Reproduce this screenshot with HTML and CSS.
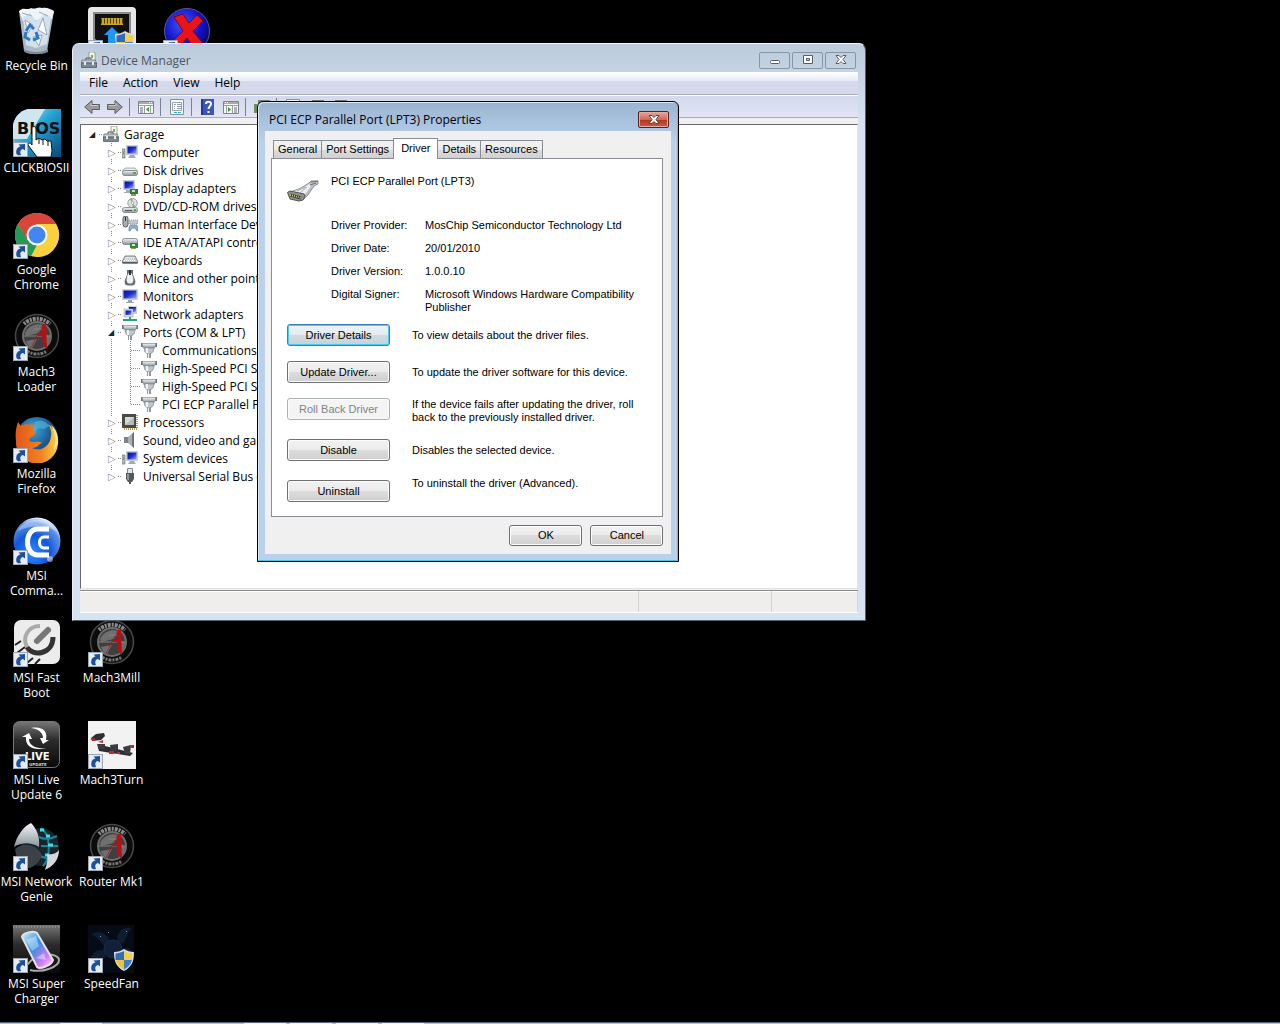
FILE: index.html
```html
<!DOCTYPE html>
<html lang="en">
<head>
  <meta charset="UTF-8">
  <title>Device Manager</title>
  <link rel="stylesheet" href="styles.css">
</head>
<body>
  <!-- shared icons -->
  <svg class="sprite" aria-hidden="true">
    <defs>
      <linearGradient id="g-metal" x1="0" y1="0" x2="0" y2="1">
        <stop offset="0" stop-color="#f4f6f8"/><stop offset="1" stop-color="#8b949b"/>
      </linearGradient>
      <linearGradient id="g-screen" x1="0" y1="0" x2="1" y2="1">
        <stop offset="0" stop-color="#0a0a9c"/><stop offset=".5" stop-color="#1c2fd0"/><stop offset="1" stop-color="#9db4f5"/>
      </linearGradient>
      <linearGradient id="g-sky" x1="0" y1="0" x2="1" y2="1">
        <stop offset="0" stop-color="#d5eef8"/><stop offset=".45" stop-color="#27a5d6"/><stop offset="1" stop-color="#034a78"/>
      </linearGradient>
      <linearGradient id="g-dark" x1="0" y1="0" x2="0" y2="1">
        <stop offset="0" stop-color="#777"/><stop offset=".4" stop-color="#2c2c2c"/><stop offset="1" stop-color="#080808"/>
      </linearGradient>
      <linearGradient id="g-phone" x1="0" y1="0" x2="1" y2="1">
        <stop offset="0" stop-color="#d7f3fb"/><stop offset=".4" stop-color="#2d8fe0"/><stop offset=".75" stop-color="#d77bf0"/><stop offset="1" stop-color="#fbe6ff"/>
      </linearGradient>
      <radialGradient id="g-blue" cx=".4" cy=".75" r=".75">
        <stop offset="0" stop-color="#2c8cff"/><stop offset=".5" stop-color="#1257d8"/><stop offset=".85" stop-color="#5c93e8"/><stop offset="1" stop-color="#e4efff"/>
      </radialGradient>
      <radialGradient id="g-ball" cx=".4" cy=".35" r=".7">
        <stop offset="0" stop-color="#4455ff"/><stop offset=".6" stop-color="#1212c8"/><stop offset="1" stop-color="#05055a"/>
      </radialGradient>
      <radialGradient id="g-globe" cx=".4" cy=".3" r=".7">
        <stop offset="0" stop-color="#3aa7dc"/><stop offset="1" stop-color="#0b2c63"/>
      </radialGradient>
      <linearGradient id="g-fox" x1="0" y1="0" x2="1" y2="0">
        <stop offset="0" stop-color="#e2571a"/><stop offset=".6" stop-color="#f08321"/><stop offset="1" stop-color="#fbd24a"/>
      </linearGradient>
    </defs>

    <symbol id="shortcut" viewBox="0 0 15 15">
      <path d="M0 0h15v15H0z" fill="#9fa6ad"/>
      <path d="M1 1h13v13H1z" fill="#e6ecf3"/>
      <path d="M3.500 12C2.500 7.500 4.500 5 7.500 4.500L5.500 2.500l6.500-.5v6.500L10 7C7.500 7.500 6.500 9.500 8 13c-2 .500-3.500.500-4.500-1z" fill="#1d4f9c"/>
    </symbol>
    <symbol id="shield" viewBox="0 0 20 22">
      <path d="M10 0c3 2 6 3 10 3 0 9-2 15-10 19C2 18 0 12 0 3c4 0 7-1 10-3z" fill="#d9dde2"/>
      <path d="M10 2C7 3.500 4 4.500 1.500 4.500V11H10z" fill="#2c6bbd"/>
      <path d="M10 2c3 1.500 6 2.500 8.500 2.500L18 11h-8z" fill="#f6cf4a"/>
      <path d="M2 11h8v9.500C5.500 18 3 15 2 11z" fill="#f1c232"/>
      <path d="M10 11h8c-1 4-3.500 7-8 9.500z" fill="#3b7ccb"/>
    </symbol>
    <symbol id="mach3" viewBox="0 0 48 48">
      <circle cx="24" cy="23" r="21.500" fill="#0c0c0c" stroke="#484848" stroke-width="1.500"/>
      <path d="M11 11C18 4 30 4 37 11" fill="none" stroke="#8a8a8a" stroke-width="4" stroke-dasharray="2 1 3 1"/>
      <path d="M14 38c6 4 14 4 20 0" fill="none" stroke="#777" stroke-width="3" stroke-dasharray="3 1 2 1"/>
      <circle cx="24" cy="23" r="14" fill="#3f3f3f" stroke="#6e6e6e" stroke-width="2"/>
      <path d="M12 20c4-8 12-10 18-8l-4 8-13 3zM13 28l11-2-5 9c-3-1-5-4-6-7zM32 21l5 2c0 5-2 8-5 10z" fill="#6f6f6f"/>
      <path d="M11 23h26M21 16h12" stroke="#858585"/>
      <path d="M16 37c5-5 8-15 14-26h3l1 25-4-4-1-9h-6c-2 5-4 10-7 14zM24 21h5l-.500-7z" fill="#b80f14" fill-rule="evenodd"/>
    </symbol>

    <!-- device tree icons -->
    <symbol id="i-case" viewBox="0 0 16 16">
      <path d="M8 0h5l1 1v8H8z" fill="#f4f6ec" stroke="#8a8f83" stroke-width=".8"/>
      <path d="M10 3h2v3h-2z" fill="#74b843"/>
      <path d="M5 8V6h5v2" fill="none" stroke="#4e585e"/>
      <path d="M1 8h13l1.500 3H.5z" fill="#c5ccd1" stroke="#5c666c" stroke-width=".7"/>
      <path d="M.5 11h15v4.500H.5z" fill="#7d8990" stroke="#465057" stroke-width=".7"/>
      <path d="M3 10h2v3H3zM11 10h2v3h-2z" fill="#e7ecef"/>
    </symbol>
    <symbol id="i-computer" viewBox="0 0 16 16">
      <path d="M0 5h3v9H0z" fill="#b7bdb0" stroke="#6f766b" stroke-width=".7"/>
      <path d="M1 7h1v3H1z" fill="#63b437"/>
      <path d="M4 1h12v10H4z" fill="#c8ced6"/>
      <path d="M5.500 2.500h9v7h-9z" fill="url(#g-screen)"/>
      <path d="M8 11h4l2 3H6z" fill="#a4abb3"/>
    </symbol>
    <symbol id="i-disk" viewBox="0 0 16 16">
      <path d="M3 6h10l2.500 3H.5z" fill="#e8eaec" stroke="#8b9196" stroke-width=".7"/>
      <rect x=".5" y="8.500" width="15" height="5" rx="2" fill="url(#g-metal)" stroke="#767c81" stroke-width=".8"/>
      <path d="M11 10h3v2h-3z" fill="#58a83c"/>
    </symbol>
    <symbol id="i-display" viewBox="0 0 16 16">
      <path d="M1 0h12v10H1z" fill="#c8ced6"/>
      <path d="M2.500 1.500h9v7h-9z" fill="url(#g-screen)"/>
      <path d="M4 10h5v2H4zM2 12h7v1H2z" fill="#a4abb3"/>
      <path d="M8 9h8v5H8z" fill="#2c7b45"/>
      <path d="M10 10h3v2h-3z" fill="#c9d8cc"/><path d="M9 14h5v2H9z" fill="#8d9a49"/>
    </symbol>
    <symbol id="i-dvd" viewBox="0 0 16 16">
      <circle cx="10.500" cy="5" r="4.700" fill="#dfe3e6" stroke="#83898e" stroke-width=".8"/>
      <path d="M10.500 5L8 1.500 10.500.500zM10.500 5l3 3.500-3 1z" fill="#8fa49a"/>
      <circle cx="10.500" cy="5" r="1.300" fill="#fff" stroke="#777" stroke-width=".5"/>
      <rect x=".5" y="9.500" width="15" height="5" rx="2" fill="url(#g-metal)" stroke="#767c81" stroke-width=".8"/>
      <path d="M3 12h7v1H3z" fill="#555"/><path d="M12 11h2v2h-2z" fill="#58a83c"/>
    </symbol>
    <symbol id="i-hid" viewBox="0 0 16 16">
      <rect x="1" y="0" width="5" height="11" rx="2.500" fill="#a9afb5" stroke="#555b60"/>
      <path d="M3 1h1v4H3z" fill="#333"/>
      <path d="M7 4h9v4H7z" fill="#c3c8cc" stroke="#6c7277" stroke-width=".6" stroke-dasharray="1 1"/>
      <path d="M8 15c-2 1-1-6 1-6h5c2 0 3 7 1 6l-2-3h-3z" fill="#8bb5cf" stroke="#537790" stroke-width=".7"/>
    </symbol>
    <symbol id="i-ide" viewBox="0 0 16 16">
      <rect x=".5" y="4.500" width="15" height="6" rx="2" fill="url(#g-metal)" stroke="#767c81" stroke-width=".8"/>
      <path d="M8 9h8v5H8z" fill="#2f8a3d"/><path d="M10 10h3v2h-3z" fill="#cfe5cf"/><path d="M9 14h5v1H9z" fill="#9b9b3c"/>
    </symbol>
    <symbol id="i-keyboard" viewBox="0 0 16 16">
      <path d="M3 4h10l2.500 5v2H.5V9z" fill="#c5cacf" stroke="#72787d" stroke-width=".9"/>
      <path d="M3.500 5.500h9M3 7h10M2 8.500h12" stroke="#fff" stroke-dasharray="1 1"/>
      <path d="M.5 10h15v1.500H.5z" fill="#50565b"/>
    </symbol>
    <symbol id="i-mouse" viewBox="0 0 16 16">
      <path d="M5 0h6v5c2 4 3 6 2 9-1 2-9 2-10 0-1-3 0-5 2-9z" fill="#666c72"/>
      <path d="M6 4c1-2 3-2 4 0 1 3 2 5 1 8-1 2-5 2-6 0-1-3 0-5 1-8z" fill="#eef0f2"/>
      <path d="M7 0h2v5H7z" fill="#2d3135"/>
    </symbol>
    <symbol id="i-monitor" viewBox="0 0 16 16">
      <path d="M0 1h16v11H0z" fill="#cdd2d8"/>
      <path d="M1.500 2.500h13v8h-13z" fill="url(#g-screen)"/>
      <path d="M6 12h4v2h2v1H4v-1h2z" fill="#9aa1a8"/>
    </symbol>
    <symbol id="i-network" viewBox="0 0 16 16">
      <path d="M6 0h9v8H6z" fill="#c8ced6"/><path d="M7 1h7v5H7z" fill="url(#g-screen)"/>
      <path d="M2 3h9v8H2z" fill="#dde1e6" stroke="#8a9097" stroke-width=".5"/><path d="M3.500 4.500h6v4.500h-6z" fill="url(#g-screen)"/>
      <path d="M7 11h2v2h6v2H1v-2h6z" fill="#1fa56b"/>
    </symbol>
    <symbol id="i-port" viewBox="0 0 16 16">
      <path d="M0 1h2v4H0zM14 1h2v4h-2z" fill="#6d757c"/>
      <path d="M1 1.500h14L13.500 6h-11z" fill="url(#g-metal)" stroke="#818a91" stroke-width=".7"/>
      <path d="M3 6h10l-1 4-2 1v1H6v-1l-2-1z" fill="#bfc7cd" stroke="#7b848b" stroke-width=".7"/>
      <path d="M5 6h2v5H5z" fill="#f1f4f6"/>
      <path d="M6 12h4v4H6z" fill="#8d969d"/><path d="M7 12h1v4H7z" fill="#f1f4f6"/>
    </symbol>
    <symbol id="i-cpu" viewBox="0 0 16 16">
      <path d="M0 0h14v14H0z" fill="#4a4a46"/>
      <path d="M15 1v14H1" fill="none" stroke="#b39b52" stroke-width="2" stroke-dasharray="1 1"/>
      <path d="M3 3h9v8H3z" fill="#b7bbbe"/><path d="M3 3h9L3 11z" fill="#d6d9db"/>
    </symbol>
    <symbol id="i-sound" viewBox="0 0 16 16">
      <path d="M2 5h4v6H2z" fill="#7b8289"/><path d="M6 5l6-5v16l-6-5z" fill="#aab0b6"/><path d="M10 2l2-2v16l-2-2z" fill="#6b7278"/>
    </symbol>
    <symbol id="i-usb" viewBox="0 0 16 16">
      <path d="M5.500 .5h5v5h-5z" fill="#e3e5e7" stroke="#83888c"/>
      <path d="M4 5h8v6l-2 3H6l-2-3z" fill="#55595d"/><path d="M5 6h2v6H6l-1-1z" fill="#93989c"/><path d="M7 14h2v2H7z" fill="#555"/>
    </symbol>

    <!-- toolbar icons -->
    <symbol id="t-arrow" viewBox="0 0 16 16">
      <path d="M8 1.500v4h7.500v5H8v4L.7 8z" fill="#9b9b9b" stroke="#5e5e5e"/>
      <path d="M7 4v2.500h7" fill="none" stroke="#c7c7c7"/>
    </symbol>
    <symbol id="t-pane" viewBox="0 0 16 16">
      <path d="M.5 2.500h15v12H.5z" fill="#f9f9f6" stroke="#7f8489"/>
      <path d="M1 3h14v2H1z" fill="#a8acb0"/><path d="M11 3h1v1h-1zM13 3h1v1h-1z" fill="#fff"/>
      <path d="M1 6.500h14M6.500 7v7M12.500 7v7" stroke="#9a9ea2"/>
      <path d="M2 9h3M2 11h3M2 13h3" stroke="#5d6d82"/>
      <path d="M11 8v5L8 10.500z" fill="#3c9a32"/>
    </symbol>
    <symbol id="t-props" viewBox="0 0 16 16">
      <path d="M1.500 .5h13v15h-13z" fill="#f7f7f5" stroke="#8a8f94"/>
      <path d="M3.500 3.500h9v8h-9z" fill="#fff" stroke="#9fa4a9"/>
      <path d="M5 5.500h2M8 5.500h4M5 7.500h1M8 7.500h4M5 9.500h1M8 9.500h4" stroke="#8aa0b5"/>
      <path d="M5 13h3v1H5zM9 13h3v1H9z" fill="#29a9d8"/>
    </symbol>
    <symbol id="t-help" viewBox="0 0 16 16">
      <path d="M1 0h13v16H1z" fill="#3c55b8"/><path d="M1 0h2v16H1z" fill="#233a92"/>
      <path d="M6 5c0-3 5-3 5 0 0 2-2.500 2.500-2.500 5M8.500 12v2" fill="none" stroke="#fff" stroke-width="2"/>
    </symbol>
    <symbol id="t-scan" viewBox="0 0 16 16">
      <path d="M4 1h12v9H4z" fill="#777d70"/><path d="M6 3h8v5H6z" fill="#2b3a8c"/><path d="M0 5h3v9H0z" fill="#6f8d5d"/>
    </symbol>
  </svg>

  <main class="desktop">
    <ul class="shortcuts">
      <li>
        <a href="#">
          <svg viewBox="0 0 48 48">
            <path d="M6 4l5 40c2 4 20 4 23 0l7-40z" fill="#a9bac6"/>
            <path d="M6 4c5-5 8 0 12-3 5 2 7-2 11 0 5-1 8 1 12 3l-2 8-29 2z" fill="#eef4f8"/>
            <path d="M10 10l7-4 6 8 9-7 6 3-4 27-11 4-10-3z" fill="#d5e1ea"/>
            <path d="M12 13l8 5-5 8zM30 11l-5 12 9 5zM20 30l9-2-3 11zM9 6l10 3M26 5l9 4" fill="#f8fbfd" stroke="#98aab8"/>
            <path d="M13 24l4-6 4 4M23 25l2 6-5 2M17 33l-5-3 1-5" fill="none" stroke="#2f74cc" stroke-width="3"/>
            <path d="M11 42c6 4 18 4 24 0v3c-6 3-18 3-23 0z" fill="#7c8b96"/>
          </svg>
          <span>Recycle Bin</span>
        </a>
      </li>
      <li>
        <a href="#">
          <svg viewBox="0 0 48 48">
            <path d="M0 16C2 6 9 1 16 0h32v48H0z" fill="url(#g-sky)"/>
            <path d="M0 16C2 6 9 1 16 0h16L14 30H0z" fill="#cfe6ef"/>
            <text x="4" y="25" class="logo-bios">BIOS</text>
            <path d="M19 18c3-1 4 0 4 3v10l3-2 3 2 3-1 2 2 4 0 1 10-1 6H24l-9-12c0-2 2-3 4 0z" fill="#fff" stroke="#111"/>
            <path d="M26 30v5M30 31v5M35 32v5" stroke="#111"/>
            <use href="#shortcut" x="0" y="33" width="15" height="15"/>
          </svg>
          <span>CLICKBIOSII</span>
        </a>
      </li>
      <li>
        <a href="#">
          <svg viewBox="0 0 48 48">
            <circle cx="24" cy="24" r="22" fill="#f9d03e"/>
            <path d="M24 13h19.100A22 22 0 0 0 4.900 13l9 16z" fill="#d9453a"/>
            <path d="M4.900 13l9.500 16L24 34l-6 11.200A22 22 0 0 1 4.900 13z" fill="#249a57"/>
            <path d="M33.500 29L23 46a22 22 0 0 0 20-33H24z" fill="#f9d03e"/>
            <circle cx="24" cy="24" r="10.500" fill="#fff"/><circle cx="24" cy="24" r="8.500" fill="#4285f4"/>
            <use href="#shortcut" x="0" y="33" width="15" height="15"/>
          </svg>
          <span>Google<br>Chrome</span>
        </a>
      </li>
      <li>
        <a href="#">
          <svg viewBox="0 0 48 48"><use href="#mach3"/><use href="#shortcut" x="0" y="33" width="15" height="15"/></svg>
          <span>Mach3<br>Loader</span>
        </a>
      </li>
      <li>
        <a href="#">
          <svg viewBox="0 0 48 48">
            <circle cx="24" cy="23" r="21" fill="url(#g-globe)"/>
            <path d="M22 7c6-3 12 0 14 4l-5 3-6-1-3 4-3-4z" fill="#58b9dc" opacity=".6"/>
            <path d="M5 7l3 4c3-2 6-2 9-1l3-2c-1 3 1 5 0 7l3 2c-1 4-6 5-7 8 2 4 10 0 13 3-4 1-4 5-10 5 8 4 18-1 19-12 1-5-1-9-3-12 7 5 11 12 10 20A21 21 0 0 1 3 26C2 19 3 12 5 7z" fill="url(#g-fox)"/>
            <path d="M38 10c8 6 9 18 3 25 2-8 2-16-3-25z" fill="#fde88a"/>
            <use href="#shortcut" x="0" y="33" width="15" height="15"/>
          </svg>
          <span>Mozilla<br>Firefox</span>
        </a>
      </li>
      <li>
        <a href="#">
          <svg viewBox="0 0 48 48">
            <circle cx="24" cy="24" r="23.500" fill="url(#g-blue)"/>
            <path d="M5 14C12-1 36-1 43 14c-10-6-28-6-38 0z" fill="#fff" opacity=".35"/>
            <path d="M36 12H25c-14 0-14 26 0 26h11" fill="none" stroke="#fff" stroke-width="5"/>
            <path d="M36 20h-5c-6 0-6 11 0 11h5" fill="none" stroke="#fff" stroke-width="3"/>
            <circle cx="37" cy="42" r="3" fill="#fff" opacity=".5"/>
            <use href="#shortcut" x="0" y="33" width="15" height="15"/>
          </svg>
          <span>MSI<br>Comma...</span>
        </a>
      </li>
      <li>
        <a href="#">
          <svg viewBox="0 0 48 48">
            <rect x="1" y="1" width="46" height="44" rx="7" fill="#ececec"/>
            <path d="M2 26L8 22M4 34l8-6M14 44l6-5M22 45l5-5" stroke="#222" stroke-width="2"/>
            <path d="M14 28c5 10 26 8 26-10" fill="none" stroke="#333" stroke-width="5"/>
            <path d="M27 7C15 7 9 18 14 28" fill="none" stroke="#aaa" stroke-width="4"/>
            <path d="M24 22L35 11" stroke="#777" stroke-width="6" stroke-linecap="round"/>
            <use href="#shortcut" x="0" y="33" width="15" height="15"/>
          </svg>
          <span>MSI Fast<br>Boot</span>
        </a>
      </li>
      <li>
        <a href="#">
          <svg viewBox="0 0 48 48">
            <rect x=".5" y=".5" width="46" height="46" rx="6" fill="url(#g-dark)" stroke="#777"/>
            <path d="M18 7c12-2 17 4 15 12h3l-6 4-3-6h3c0-5-4-9-12-10z" fill="#fff"/>
            <path d="M33 27c-12 3-21-1-20-11H9l7-4 3 6h-3c0 6 6 10 17 9z" fill="#fff"/>
            <text x="12" y="39" class="logo-live">LIVE</text>
            <text x="16" y="45" class="logo-update">UPDATE</text>
            <use href="#shortcut" x="0" y="33" width="15" height="15"/>
          </svg>
          <span>MSI Live<br>Update 6</span>
        </a>
      </li>
      <li>
        <a href="#">
          <svg viewBox="0 0 48 48">
            <circle cx="27" cy="24" r="19" fill="#17262c"/>
            <path d="M28 5c10 6 10 30 2 38M26 14c6 3 12 2 18-1M28 23h17M27 33c6 3 10 3 16 1" fill="none" stroke="#1c8794" stroke-width="2"/>
            <path d="M27 7h4M33 13h4M35 22h5M32 32h4" stroke="#3fdbe8" stroke-width="3"/>
            <path d="M1 24C4 12 11 3 18 0c6 6 9 14 8 24-8-5-17-5-25 0z" fill="url(#g-metal)"/>
            <path d="M2 26c9-8 22-4 27 6-2 7-8 12-13 13C8 43 3 36 2 26z" fill="#3b4144"/>
            <path d="M46 27c0 9-5 16-14 20 2-6 3-11 2-16 5 1 9 0 12-4z" fill="#d5d8da"/>
            <use href="#shortcut" x="0" y="33" width="15" height="15"/>
          </svg>
          <span>MSI Network<br>Genie</span>
        </a>
      </li>
      <li>
        <a href="#">
          <svg viewBox="0 0 48 48">
            <path d="M0 0h47v48H0z" fill="url(#g-dark)"/>
            <path d="M0 2h47" stroke="#aaa" stroke-dasharray="1 2"/>
            <path d="M14 40c10-14 32-12 32-5s-16 13-29 10" fill="none" stroke="#aaa" stroke-width="2"/>
            <path d="M9 12c0-4 12-7 15-4l16 27c-1 5-13 10-16 7z" fill="url(#g-phone)" stroke="#e3e3e3" stroke-width="2"/>
            <path d="M13 15l10-4 3 10-7 5zM23 33l8-5 2 7z" fill="#fff" opacity=".4"/>
            <use href="#shortcut" x="0" y="33" width="15" height="15"/>
          </svg>
          <span>MSI Super<br>Charger</span>
        </a>
      </li>
      <li class="col-2 row-1">
        <a href="#" aria-label="Network update">
          <svg viewBox="0 0 48 48">
            <rect width="48" height="48" rx="4" fill="#e6e6e6"/>
            <path d="M6 6h36v26l-5 5H11l-5-5z" fill="#111" stroke="#8a8a8a" stroke-width="2"/>
            <path d="M13 11h22v7H13z" fill="#c9a62b"/><path d="M13 14h22" stroke="#4b3c08" stroke-width="5" stroke-dasharray="1 2"/>
            <path d="M24 20l8 8h-4v10h-8V28h-4z" fill="#2196f3"/>
            <use href="#shield" x="27" y="24" width="20" height="22"/>
            <use href="#shortcut" x="0" y="33" width="15" height="15"/>
          </svg>
        </a>
      </li>
      <li class="col-2 row-7">
        <a href="#">
          <svg viewBox="0 0 48 48"><use href="#mach3"/><use href="#shortcut" x="0" y="33" width="15" height="15"/></svg>
          <span>Mach3Mill</span>
        </a>
      </li>
      <li class="col-2 row-8">
        <a href="#">
          <svg viewBox="0 0 48 48">
            <path d="M0 0h48v48H0z" fill="#f3f2f2"/>
            <path d="M8 13l8-1 1 3-4 4-9 1-1-3zM9 23l36 9-3 3-31-5z" fill="#2d2d33"/>
            <path d="M10 23h7v5h-7zM22 24l8-1v7l-7 1zM35 26l8-2-1 9-5 0z" fill="#3b3b42"/>
            <path d="M2 18l5-1v3zM10 21l5-2v3zM21 30h5v3h-5zM43 24h3v3h-3zM29 31h3v2h-3z" fill="#c3283a"/>
            <use href="#shortcut" x="0" y="33" width="15" height="15"/>
          </svg>
          <span>Mach3Turn</span>
        </a>
      </li>
      <li class="col-2 row-9">
        <a href="#">
          <svg viewBox="0 0 48 48"><use href="#mach3"/><use href="#shortcut" x="0" y="33" width="15" height="15"/></svg>
          <span>Router Mk1</span>
        </a>
      </li>
      <li class="col-2 row-10">
        <a href="#">
          <svg viewBox="0 0 48 48">
            <path d="M0 0h46v48H0z" fill="#060b16"/>
            <path d="M22 16C18 6 8 5 3 10c5 1 9 5 13 11zM29 16c0-10 6-14 14-13-3 5-5 10-8 16zM16 25C6 24 2 30 3 37c4-4 9-5 15-4zM34 24c7-2 10 1 11 5l-10 1z" fill="#101c30"/>
            <circle cx="25" cy="24" r="9" fill="#13203a" stroke="#1c2c4a"/>
            <path d="M12 11l1 1M20 7l1 1M38 6l1 1" stroke="#7f95bb"/>
            <use href="#shield" x="26" y="24" width="20" height="22"/>
            <use href="#shortcut" x="0" y="33" width="15" height="15"/>
          </svg>
          <span>SpeedFan</span>
        </a>
      </li>
      <li class="col-3 row-1">
        <a href="#" aria-label="Uninstaller">
          <svg viewBox="0 0 48 48">
            <circle cx="24" cy="24" r="22.500" fill="url(#g-ball)" stroke="#5a5a9c"/>
            <path d="M11 10l9-3 6 9 8-8 6 6-10 10 11 14-10 3-7-10-9 10-6-6 11-11z" fill="#e8141c" stroke="#7c0510"/>
            <use href="#shortcut" x="0" y="33" width="15" height="15"/>
          </svg>
        </a>
      </li>
    </ul>

    <!-- Device Manager -->
    <section class="window manager">
      <header class="titlebar">
        <svg class="icon"><use href="#i-case"/></svg>
        <h1>Device Manager</h1>
        <div class="controls">
          <button type="button" aria-label="Minimize"><svg viewBox="0 0 12 10"><rect x="1.500" y="5.500" width="9" height="3" rx="1" fill="#fff" stroke="#545d68"/></svg></button>
          <button type="button" aria-label="Maximize"><svg viewBox="0 0 12 10"><path d="M1.500 .5h9v8h-9zM4.500 3.500h3v2h-3z" fill="#fff" fill-rule="evenodd" stroke="#545d68"/></svg></button>
          <button type="button" aria-label="Close"><svg viewBox="0 0 12 10"><path d="M1 .5h3l2 2 2-2h3L8 4.500l3 4H8l-2-2-2 2H1l3-4z" fill="#fff" stroke="#545d68"/></svg></button>
        </div>
      </header>
      <div class="client">
        <nav class="menubar">
          <button type="button">File</button>
          <button type="button">Action</button>
          <button type="button">View</button>
          <button type="button">Help</button>
        </nav>
        <div class="toolbar">
          <button type="button" aria-label="Back"><svg class="icon"><use href="#t-arrow"/></svg></button>
          <button type="button" aria-label="Forward"><svg class="icon flip"><use href="#t-arrow"/></svg></button>
          <i class="sep"></i>
          <button type="button" aria-label="Show tree"><svg class="icon"><use href="#t-pane"/></svg></button>
          <i class="sep"></i>
          <button type="button" aria-label="Properties"><svg class="icon"><use href="#t-props"/></svg></button>
          <i class="sep"></i>
          <button type="button" aria-label="Help"><svg class="icon"><use href="#t-help"/></svg></button>
          <button type="button" aria-label="Show action pane"><svg class="icon flip"><use href="#t-pane"/></svg></button>
          <i class="sep"></i>
          <button type="button" aria-label="Scan"><svg class="icon"><use href="#t-scan"/></svg></button>
          <i class="sep"></i>
          <button type="button" aria-label="Update driver"><svg class="icon"><use href="#t-props"/></svg></button>
          <button type="button" aria-label="Uninstall"><svg class="icon"><use href="#t-scan"/></svg></button>
          <button type="button" aria-label="Disable"><svg class="icon"><use href="#t-scan"/></svg></button>
        </div>
        <div class="tree">
          <ul>
            <li>
              <div class="node open"><svg class="icon"><use href="#i-case"/></svg>Garage</div>
              <ul>
                <li><div class="node shut"><svg class="icon"><use href="#i-computer"/></svg>Computer</div></li>
                <li><div class="node shut"><svg class="icon"><use href="#i-disk"/></svg>Disk drives</div></li>
                <li><div class="node shut"><svg class="icon"><use href="#i-display"/></svg>Display adapters</div></li>
                <li><div class="node shut"><svg class="icon"><use href="#i-dvd"/></svg>DVD/CD-ROM drives</div></li>
                <li><div class="node shut"><svg class="icon"><use href="#i-hid"/></svg>Human Interface Devices</div></li>
                <li><div class="node shut"><svg class="icon"><use href="#i-ide"/></svg>IDE ATA/ATAPI controllers</div></li>
                <li><div class="node shut"><svg class="icon"><use href="#i-keyboard"/></svg>Keyboards</div></li>
                <li><div class="node shut"><svg class="icon"><use href="#i-mouse"/></svg>Mice and other pointing devices</div></li>
                <li><div class="node shut"><svg class="icon"><use href="#i-monitor"/></svg>Monitors</div></li>
                <li><div class="node shut"><svg class="icon"><use href="#i-network"/></svg>Network adapters</div></li>
                <li>
                  <div class="node open"><svg class="icon"><use href="#i-port"/></svg>Ports (COM &amp; LPT)</div>
                  <ul>
                    <li><div class="node"><svg class="icon"><use href="#i-port"/></svg>Communications Port</div></li>
                    <li><div class="node"><svg class="icon"><use href="#i-port"/></svg>High-Speed PCI Serial</div></li>
                    <li><div class="node"><svg class="icon"><use href="#i-port"/></svg>High-Speed PCI Serial</div></li>
                    <li><div class="node"><svg class="icon"><use href="#i-port"/></svg>PCI ECP Parallel Port</div></li>
                  </ul>
                </li>
                <li><div class="node shut"><svg class="icon"><use href="#i-cpu"/></svg>Processors</div></li>
                <li><div class="node shut"><svg class="icon"><use href="#i-sound"/></svg>Sound, video and game controllers</div></li>
                <li><div class="node shut"><svg class="icon"><use href="#i-computer"/></svg>System devices</div></li>
                <li><div class="node shut"><svg class="icon"><use href="#i-usb"/></svg>Universal Serial Bus controllers</div></li>
              </ul>
            </li>
          </ul>
        </div>
        <div class="statusbar"><span></span><span></span><span></span></div>
      </div>
    </section>

    <!-- Properties dialog -->
    <section class="window dialog" role="dialog" aria-labelledby="dialog-title">
      <header class="titlebar">
        <h2 id="dialog-title">PCI ECP Parallel Port (LPT3) Properties</h2>
        <button type="button" class="close" aria-label="Close"><svg viewBox="0 0 12 10"><path d="M1 .5h3l2 2 2-2h3L8 4.500l3 4H8l-2-2-2 2H1l3-4z" fill="#fff" stroke="#5e4440"/></svg></button>
      </header>
      <div class="dialog-body">
        <div class="tabs" role="tablist">
          <button type="button" role="tab">General</button>
          <button type="button" role="tab">Port Settings</button>
          <button type="button" role="tab" aria-selected="true" class="active">Driver</button>
          <button type="button" role="tab">Details</button>
          <button type="button" role="tab">Resources</button>
        </div>
        <div class="tab-panel" role="tabpanel">
          <div class="device">
            <svg viewBox="0 0 32 32">
              <path d="M1 14l13-5 8-5 2-2h7v3l-4 2-6 9-4 4z" fill="#b9bfc3" stroke="#8d9397"/>
              <path d="M5 13l11-4 6-4 2 2-5 7-3 2z" fill="#eceff1"/>
              <path d="M10 12l9-4M13 14l7-6" stroke="#aab0b4"/>
              <path d="M24 3l7-1M23 6l6-2" stroke="#6b7074"/>
              <path d="M.5 13.500L3 12l14 3 1 2-2 4-4 1-9-2z" fill="#8f9592" stroke="#4d5254"/>
              <path d="M3 16l11 3" stroke="#2f3126" stroke-width="3"/>
              <path d="M3 16l11 3" stroke="#d8cf7a" stroke-width="2" stroke-dasharray="1 1"/>
            </svg>
            <span>PCI ECP Parallel Port (LPT3)</span>
          </div>
          <dl class="details">
            <dt>Driver Provider:</dt><dd>MosChip Semiconductor Technology Ltd</dd>
            <dt>Driver Date:</dt><dd>20/01/2010</dd>
            <dt>Driver Version:</dt><dd>1.0.0.10</dd>
            <dt>Digital Signer:</dt><dd>Microsoft Windows Hardware Compatibility Publisher</dd>
          </dl>
          <div class="actions">
            <button type="button" class="btn focused">Driver Details</button><p>To view details about the driver files.</p>
            <button type="button" class="btn">Update Driver...</button><p>To update the driver software for this device.</p>
            <button type="button" class="btn top" disabled>Roll Back Driver</button><p>If the device fails after updating the driver, roll back to the previously installed driver.</p>
            <button type="button" class="btn">Disable</button><p>Disables the selected device.</p>
            <button type="button" class="btn last">Uninstall</button><p class="top">To uninstall the driver (Advanced).</p>
          </div>
        </div>
        <footer class="dialog-footer">
          <button type="button" class="btn">OK</button>
          <button type="button" class="btn">Cancel</button>
        </footer>
      </div>
    </section>

    <!-- auto-hidden taskbar edge -->
    <div class="taskbar"><i class="task start"></i><i class="task first"></i><i class="task"></i><i class="task"></i><i class="task"></i></div>
  </main>
</body>
</html>
```
FILE: styles.css
```css
* { box-sizing: border-box; }
body {
  margin: 0;
  background: #000;
  font: 12px/15px "Open Sans", "Noto Sans", sans-serif;
  color: #000;
}
ul, dl, dd, p, h1, h2 { margin: 0; padding: 0; }
ul { list-style: none; }
h1, h2 { font-size: 12px; font-weight: 400; }
button { font: inherit; color: inherit; padding: 0; border: 0; background: none; }
.sprite { position: absolute; width: 0; height: 0; }
.icon { width: 16px; height: 16px; flex: none; }
.flip { transform: scaleX(-1); }

/* desktop */
.desktop {
  position: relative;
  display: flex;
  flex-direction: column;
  min-height: 100vh;
  overflow: hidden;
}
.shortcuts {
  flex: 1;
  display: grid;
  grid-template-columns: repeat(3, 75px);
  grid-auto-rows: 81px;
  row-gap: 21px;
  margin-left: -1px;
  padding-top: 7px;
}
.shortcuts li { grid-column: 1; }
.shortcuts a {
  display: flex;
  flex-direction: column;
  align-items: center;
  gap: 3px;
  color: #fff;
  text-align: center;
  text-decoration: none;
  white-space: nowrap;
}
.shortcuts svg { width: 48px; height: 48px; }
.shortcuts .col-2 { grid-column: 2; }
.shortcuts .col-3 { grid-column: 3; }
.row-1 { grid-row: 1; }
.row-7 { grid-row: 7; }
.row-8 { grid-row: 8; }
.row-9 { grid-row: 9; }
.row-10 { grid-row: 10; }
.logo-bios { font: 700 16px "DejaVu Sans", sans-serif; fill: #111; }
.logo-live { font: 700 10px "DejaVu Sans", sans-serif; fill: #fff; }
.logo-update { font: 700 4px "DejaVu Sans", sans-serif; fill: #ccc; }

/* windows */
.window { position: absolute; display: flex; flex-direction: column; }
.titlebar { display: flex; align-items: center; }

.manager {
  inset: 43px 414px 403px 72px;
  min-width: 600px;
  min-height: 500px;
  padding: 0 7px 7px;
  border: 1px solid #e9f1f8;
  border-color: #f2f6fa #55606b #55606b #e9f1f8;
  border-radius: 7px 7px 0 0;
  background: linear-gradient(#bccbdb, #d6e3f1 80px, #d6e3f1);
}
.manager .titlebar { height: 28px; padding: 4px 2px 0 1px; gap: 4px; color: #4a5563; }
.controls { display: flex; gap: 2px; margin-left: auto; }
.controls button {
  width: 31px;
  height: 17px;
  border: 1px solid #8795a8;
  border-radius: 2px;
}
.controls svg, .close svg { display: block; width: 12px; height: 10px; margin: auto; }
.client { flex: 1; display: flex; flex-direction: column; background: #f0f0f0; }
.menubar {
  display: flex;
  gap: 15px;
  height: 23px;
  padding: 0 9px 1px;
  border-bottom: 1px solid #a9adbb;
  background: linear-gradient(#fff, #e6eaf5 9px, #d4daec 9px);
}
.toolbar {
  display: flex;
  align-items: center;
  gap: 1px;
  height: 23px;
  padding-left: 1px;
  border-top: 1px solid #fff;
  border-bottom: 1px solid #a9adbb;
  background: linear-gradient(#d3d9eb, #e1e5f5);
}
.toolbar button { width: 22px; height: 20px; padding: 2px 3px; }
.toolbar .icon { display: block; }
.sep { width: 1px; height: 18px; margin: 0 4px 0 2px; background: #7d8293; }

/* device tree */
.tree {
  flex: 1;
  margin-top: 6px;
  border: 1px solid #696969;
  border-right-color: #e3e3e3;
  border-bottom-color: #e3e3e3;
  background: #fff;
  overflow: hidden;
  white-space: nowrap;
}
.tree > ul { padding-left: 8px; }
.tree ul ul { padding-left: 19px; background: repeating-linear-gradient(#888 0 1px, transparent 1px 2px) 22px 0 / 1px calc(100% - 9px) no-repeat; }
.node { position: relative; display: flex; align-items: center; gap: 5px; height: 18px; }
.node::before {
  content: "";
  width: 14px;
  height: 1px;
  margin-right: -5px;
  background: repeating-linear-gradient(90deg, #888 0 1px, transparent 1px 2px) 4px 0 no-repeat;
}
.node.open::after, .node.shut::after {
  content: "▷";
  position: absolute;
  left: 0;
  top: 4px;
  width: 9px;
  height: 12px;
  background: #fff;
  font: 10px/12px "DejaVu Sans", sans-serif;
  color: #8c8c8c;
}
.node.open::after { content: "◢"; font-size: 8px; color: #222; }

.statusbar {
  display: flex;
  height: 23px;
  margin-top: 1px;
  border-top: 1px solid #8a8a8a;
  border-bottom: 1px solid #fff;
  background: #f0eded;
  box-shadow: inset 0 1px #fff;
}
.statusbar span { width: 133px; border-left: 1px solid #d5d3d3; }
.statusbar span:first-child { flex: 1; border-left: 0; }
.statusbar span:last-child { width: 87px; border-right: 1px solid #d5d3d3; }

/* properties dialog */
.dialog {
  left: 257px;
  top: 101px;
  width: 33%;
  min-width: 421px;
  padding: 0 7px 7px;
  border: 1px solid #000;
  border-radius: 6px 6px 0 0;
  background: linear-gradient(#9ab4d1, #b9d1ea 40px, #b9d1ea);
  box-shadow: inset -1px -1px #4cc3e4, inset 1px 1px #d9e8f5;
}
.dialog .titlebar { height: 29px; padding: 6px 2px 0 4px; justify-content: space-between; }
.close {
  width: 31px;
  height: 17px;
  border: 1px solid #5b1f1d;
  border-radius: 2px;
  background: linear-gradient(#e3a79b, #cf6a59 50%, #b5301a 50%, #cd5b45);
  box-shadow: inset 0 0 0 1px #e3aca2;
}
.dialog-body {
  padding: 7px 8px 8px 6px;
  background: #f0f0f0;
  font: 11px/13px "Liberation Sans", Arial, sans-serif;
}
.tabs { display: flex; align-items: flex-end; height: 20px; padding-left: 2px; }
.tabs button {
  height: 18px;
  padding: 0 4px;
  margin-right: -1px;
  border: 1px solid #898c95;
  border-bottom: 0;
  background: linear-gradient(#f3f3f3, #ebebeb 50%, #dddddd 50%, #d0d0d0);
}
.tabs .active { position: relative; height: 21px; margin-bottom: -1px; padding: 0 7px 2px; background: #fff; }
.tab-panel { padding: 16px 14px 14px 15px; border: 1px solid #898c95; background: #fff; }
.device { display: flex; gap: 12px; }
.device svg { width: 32px; height: 32px; margin-top: 4px; }
.details {
  display: grid;
  grid-template-columns: 94px 1fr;
  row-gap: 10px;
  padding: 8px 14px 0 44px;
}
.actions {
  display: grid;
  grid-template-columns: 103px 1fr;
  gap: 15px 22px;
  align-items: center;
  padding: 10px 14px 0 0;
}
.btn {
  height: 22px;
  border: 1px solid #707070;
  border-radius: 3px;
  background: linear-gradient(#f2f2f2, #ebebeb 50%, #dddddd 50%, #cfcfcf);
  box-shadow: inset 0 0 0 1px #fcfcfc;
}
.btn.focused {
  border-color: #3c7fb1;
  background: linear-gradient(#eef4f7, #e3ebef 50%, #d0dce2 50%, #c6d2d8);
  box-shadow: inset 0 0 0 1px #48cdf2;
}
.btn:disabled { border-color: #adb2b5; color: #838383; background: #f4f4f4; }
.top { align-self: start; }
.btn.last { margin-top: 4px; }
.actions p.top { padding-top: 1px; }
.dialog-footer { display: flex; justify-content: flex-end; gap: 8px; padding-top: 8px; }
.dialog-footer .btn { width: 73px; height: 21px; }

.taskbar {
  display: flex;
  gap: 4px;
  height: 2px;
  border-top: 1px solid #566b7d;
  background: #a9c2da;
}
.task { width: 42px; background: #f4f4f4; }
.task.start { margin-left: 60px; }
.task.first { margin-left: 138px; }
```
